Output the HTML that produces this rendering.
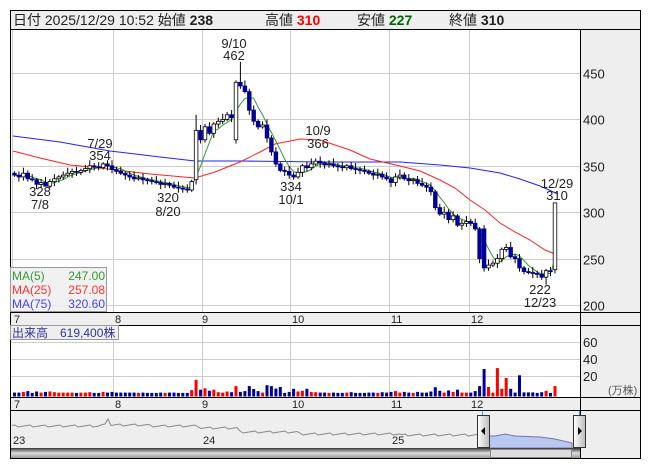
<!DOCTYPE html>
<html><head><meta charset="utf-8"><style>
body{margin:0;background:#fff;width:653px;height:470px;overflow:hidden;font-family:"Liberation Sans","Noto Sans CJK JP",sans-serif}
svg text{font-family:"Liberation Sans","Noto Sans CJK JP",sans-serif}
</style></head><body>
<svg id="s" width="653" height="470" xmlns="http://www.w3.org/2000/svg">
<rect x="10.5" y="10.5" width="630" height="448" fill="#fff" stroke="#000"/>
<rect x="11" y="11" width="629" height="18" fill="#eee"/>
<line x1="10" y1="29.5" x2="641" y2="29.5" stroke="#000"/>
<text x="13" y="25" font-size="14" fill="#222">日付 2025/12/29 10:52 始値 <tspan font-weight="bold">238</tspan></text>
<text x="265" y="25" font-size="14" fill="#222">高値 <tspan font-weight="bold" fill="#f00">310</tspan></text>
<text x="357" y="25" font-size="14" fill="#222">安値 <tspan font-weight="bold" fill="#060">227</tspan></text>
<text x="449" y="25" font-size="14" fill="#222">終値 <tspan font-weight="bold">310</tspan></text>
<rect x="580" y="30" width="60" height="428" fill="#eee"/>
<line x1="580.5" y1="30" x2="580.5" y2="458" stroke="#000"/>
<rect x="11" y="312" width="569" height="13" fill="#eee"/>
<rect x="11" y="397" width="569" height="13" fill="#eee"/>
<line x1="10" y1="312.5" x2="641" y2="312.5" stroke="#000"/>
<line x1="10" y1="325.5" x2="641" y2="325.5" stroke="#000"/>
<line x1="10" y1="397.5" x2="641" y2="397.5" stroke="#000"/>
<line x1="10" y1="410.5" x2="641" y2="410.5" stroke="#000"/>
<rect x="11" y="411" width="569" height="37" fill="#eee"/>
<g id="g"></g>
</svg>
<script>
var g=document.getElementById('g'),h='';
function Y(p){return 73+(450-p)*0.928}
function X(i){return 14.5+i*4.43}
// grid
[113,202,290,389,469].forEach(function(x){h+='<line x1="'+(x+.5)+'" y1="30" x2="'+(x+.5)+'" y2="312" stroke="#ccc"/><line x1="'+(x+.5)+'" y1="326" x2="'+(x+.5)+'" y2="397" stroke="#ccc"/>';});
h+='<line x1="12.5" y1="30" x2="12.5" y2="312" stroke="#ccc"/>';
[450,400,350,300,250,200].forEach(function(p){var y=Math.round(Y(p))+.5;h+='<line x1="11" y1="'+y+'" x2="580" y2="'+y+'" stroke="#ccc"/><text x="583" y="'+(y+5)+'" font-size="13" fill="#222">'+p+'</text>';});
[[60,342],[40,359],[20,376]].forEach(function(a){h+='<line x1="11" y1="'+(a[1]+.5)+'" x2="580" y2="'+(a[1]+.5)+'" stroke="#ccc"/><text x="583" y="'+(a[1]+5)+'" font-size="13" fill="#222">'+a[0]+'</text>';});
h+='<text x="608" y="394" font-size="11" fill="#555">(万株)</text>';
[['7',14],['8',115],['9',202],['10',292],['11',391],['12',471]].forEach(function(m){h+='<text x="'+m[1]+'" y="323" font-size="11" fill="#222">'+m[0]+'</text><text x="'+m[1]+'" y="408" font-size="11" fill="#222">'+m[0]+'</text>';});
var c=[340,338,342,336,335,330,332,328,333,336,338,340,342,344,343,345,347,350,349,348,352,350,346,
344,342,340,338,336,337,335,334,333,332,330,331,329,327,326,325,324,333,388,378,
392,385,395,398,400,405,402,440,436,430,410,398,392,394,380,365,352,345,344,
340,338,343,350,348,352,355,353,351,352,350,349,348,350,347,346,345,344,342,340,341,338,
336,332,338,340,336,334,335,331,329,327,322,305,298,300,292,296,286,288,
290,288,282,250,240,243,245,250,260,262,252,250,240,236,235,234,233,230,237,236,310];
var n=c.length;
// MA lines
function pl(pts,col){return '<polyline fill="none" stroke="'+col+'" stroke-width="1" points="'+pts.map(function(p){return p.join(',')}).join(' ')+'"/>';}
h+=pl([[13,136],[60,142],[110,151],[160,157],[195,161],[240,161],[320,162],[400,162],[440,165],[470,168],[500,173],[520,179],[540,186],[558,194]],'#22f');
h+=pl([[13,151],[40,158],[70,165],[100,168],[150,174],[195,178],[215,172],[240,162],[260,152],[275,144],[300,139],[320,140],[335,145],[350,150],[370,159],[400,166],[420,171],[440,180],[455,188],[470,200],[485,210],[500,223],[515,232],[530,240],[545,250],[555,254]],'#f22');
var m5=[];for(var i=0;i<n;i++){var s=0,k=0;for(var j=Math.max(0,i-4);j<=i;j++){s+=c[j];k++}m5.push([X(i).toFixed(1),Y(s/k).toFixed(1)])}
h+=pl(m5,'#393');
// candles
for(var i=0;i<n;i++){var o=i?c[i-1]:c[0]+2,cl=c[i];if(i==41)o=335;if(i==50)o=378;if(i==n-1)o=238;if(i==106)o=282;
var hi=Math.max(o,cl)+2+(i*7%5),lo=Math.min(o,cl)-2-(i*3%4);if(i==51)hi=462;if(i==7)lo=328;if(i==120)lo=222;if(i==41)hi=405;if(i==n-1)hi=310;
var x=X(i),up=cl>=o;h+='<line x1="'+x.toFixed(1)+'" y1="'+Y(hi).toFixed(1)+'" x2="'+x.toFixed(1)+'" y2="'+Y(lo).toFixed(1)+'" stroke="#000"/>';
var t=Y(Math.max(o,cl)),b=Y(Math.min(o,cl));if(b-t<1)b=t+1;
h+='<rect x="'+(x-1.8).toFixed(1)+'" y="'+t.toFixed(1)+'" width="3.6" height="'+(b-t).toFixed(1)+'" fill="'+(up?'#fff':'#009')+'" stroke="'+(up?'#000':'#009')+'" stroke-width="0.8"/>';
// volume
var v=3+Math.min(8,Math.abs(cl-o)*0.4),col=cl>o?'#f00':(cl<o?'#009':'#888');
var ov={41:18,106:30,107:10,109:31,110:8,111:20,112:8,114:23,115:4,116:4,117:4,123:62,57:12,58:11,60:10,63:8,66:8};
if(ov[i]!=null)v=ov[i];if(i==109||i==111||i==123||i==41)col='#f00';if(i==106||i==114)col='#009';
var vy=396-v*0.9;h+='<rect x="'+(x-1.5).toFixed(1)+'" y="'+vy.toFixed(1)+'" width="3" height="'+(396.5-vy).toFixed(1)+'" fill="'+col+'"/>';}
// annotations
function tx(x,y,s){h+='<text x="'+x+'" y="'+y+'" font-size="13" fill="#222" text-anchor="middle">'+s+'</text>';}
tx(234,48,'9/10');tx(234,60,'462');tx(100,148,'7/29');tx(100,160,'354');tx(318,135,'10/9');tx(318,148,'366');
tx(40,196,'328');tx(40,209,'7/8');tx(168,202,'320');tx(168,216,'8/20');tx(291,191,'334');tx(291,204,'10/1');
tx(557,188,'12/29');tx(557,200,'310');tx(540,294,'222');tx(540,307,'12/23');
// legend
h+='<rect x="10.5" y="267.5" width="96" height="44" fill="#eee" fill-opacity="0.85" stroke="#999"/>';
h+='<text x="12" y="280" font-size="12" fill="#393">MA(5)</text><text x="105" y="280" font-size="12" fill="#393" text-anchor="end">247.00</text>';
h+='<text x="12" y="294" font-size="12" fill="#f33">MA(25)</text><text x="105" y="294" font-size="12" fill="#f33" text-anchor="end">257.08</text>';
h+='<text x="12" y="308" font-size="12" fill="#44f">MA(75)</text><text x="105" y="308" font-size="12" fill="#44f" text-anchor="end">320.60</text>';
h+='<rect x="10.5" y="325.5" width="108" height="14" fill="#eee" stroke="#999"/><text x="12" y="337" font-size="12" fill="#339">出来高　619,400株</text>';
// navigator
var nv=[];for(var x=12;x<=480;x+=3){var yy=427+ (x<100?-2:x<150?-3:x<200?-2:x<240?0:x<300?4:x<400?6:x<480?7:7)+((x*13)%5)*0.5;if(x>105&&x<110)yy=419;nv.push(x+','+yy.toFixed(1))}
h+='<polyline fill="none" stroke="#888" points="'+nv.join(' ')+'"/>';
h+='<path d="M483,436 L495,436 L505,434 L515,436 L540,437 L555,439 L572,443 L572,448 L483,448Z" fill="#b8c8f0" stroke="#77a"/>';
h+='<text x="13" y="444" font-size="11" fill="#222">23</text><text x="203" y="444" font-size="11" fill="#222">24</text><text x="392" y="444" font-size="11" fill="#222">25</text>';
h+='<line x1="482.5" y1="411" x2="482.5" y2="458" stroke="#3ac"/><line x1="579.5" y1="411" x2="579.5" y2="458" stroke="#3ac"/>';
h+='<defs><linearGradient id="hg" x1="0" x2="1"><stop offset="0" stop-color="#fff"/><stop offset="1" stop-color="#bbb"/></linearGradient><linearGradient id="sg" x1="0" y1="0" x2="0" y2="1"><stop offset="0" stop-color="#333"/><stop offset="0.5" stop-color="#ddd"/><stop offset="1" stop-color="#999"/></linearGradient></defs>';
h+='<rect x="477.5" y="415.5" width="12" height="32" fill="url(#hg)" stroke="#333"/><path d="M481,431 L485,427 L485,435Z" fill="#000"/>';
h+='<rect x="573.5" y="415.5" width="12" height="32" fill="url(#hg)" stroke="#333"/><path d="M578,427 L582,431 L578,435Z" fill="#000"/>';
h+='<rect x="11" y="448" width="569" height="10" fill="url(#sg)"/><rect x="490.5" y="449.5" width="81" height="8" fill="#ddd" stroke="#888"/>';
g.innerHTML=h;
</script>
</body></html>
